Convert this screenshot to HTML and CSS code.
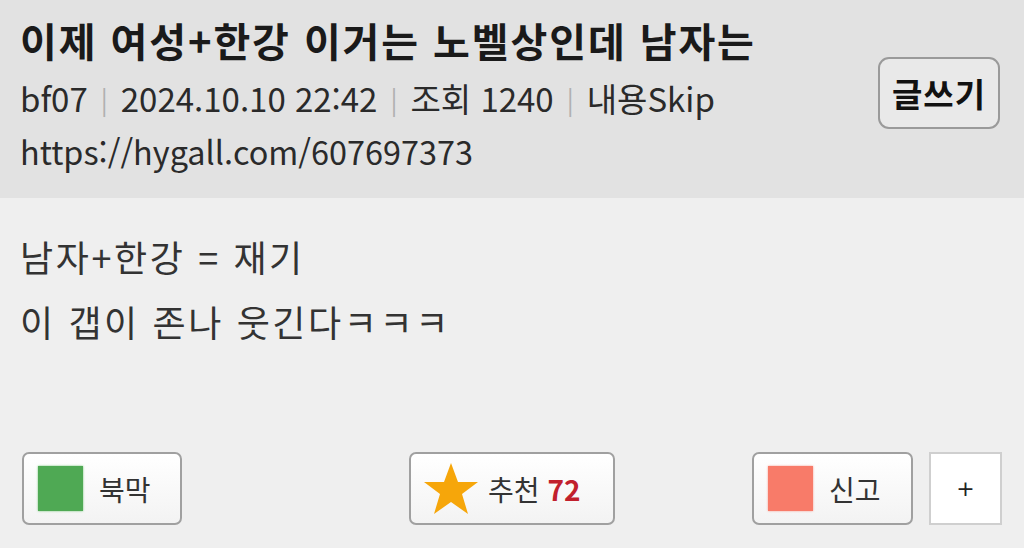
FILE: index.html
```html
<!DOCTYPE html>
<html lang="ko">
<head>
<meta charset="utf-8">
<link rel="stylesheet" href="styles.css">
</head>
<body>
<div class="page">
  <header class="head">
    <div class="head-text">
      <h1 class="title">이제 여성+한강 이거는 노벨상인데 남자는</h1>
      <div class="meta">bf07<span class="sep">|</span>2024.10.10 22:42<span class="sep">|</span>조회 1240<span class="sep">|</span>내용Skip</div>
      <div class="url">https://hygall.com/607697373</div>
    </div>
    <button class="write">글쓰기</button>
  </header>
  <main class="content">
    <p class="line">남자+한강 = 재기</p>
    <p class="line">이 갭이 존나 웃긴다ㅋㅋㅋ</p>
  </main>
  <footer class="actions">
    <div class="grp left">
      <button class="btn"><span class="sq green"></span><span class="lbl">북막</span></button>
    </div>
    <div class="grp mid">
      <button class="btn rec">
        <svg class="star" viewBox="0 0 56 54" width="56" height="54"><polygon points="28,1 35,20 55,20 39,32 45,52 28,40 11,52 17,32 1,20 21,20" fill="#f6a60a"/></svg>
        <span class="lbl">추천 <b class="cnt">72</b></span>
      </button>
    </div>
    <div class="grp right">
      <button class="btn"><span class="sq red"></span><span class="lbl">신고</span></button>
      <button class="plus">+</button>
    </div>
  </footer>
</div>
</body>
</html>
```
FILE: styles.css
```css
* { box-sizing: border-box; }
html, body { margin: 0; padding: 0; }
body {
  font-family: "Noto Sans CJK KR", "Noto Sans", sans-serif;
  background: #efefef;
  color: #222;
}
.page {
  width: 1024px;
  height: 548px;
  display: flex;
  flex-direction: column;
  overflow: hidden;
}
.head {
  height: 198px;
  background: #e2e2e2;
  padding: 14px 24px 0 20px;
  display: flex;
  justify-content: space-between;
  align-items: flex-start;
}
.title {
  margin: 0;
  font-size: 40px;
  line-height: 52px;
  font-weight: 700;
  color: #1a1a1a;
  letter-spacing: 1.9px;
  white-space: nowrap;
}
.meta, .url {
  font-size: 33px;
  line-height: 52px;
  color: #2a2a2a;
  white-space: nowrap;
}
.meta { margin-top: 6px; }
.url { margin-top: -2px; font-size: 32.4px; }
.sep {
  color: #b0b0b0;
  font-size: 26px;
  margin: 0 13px;
  position: relative;
  top: -2px;
}
.write {
  margin-top: 43px;
  width: 122px;
  height: 72px;
  border: 2px solid #9a9a9a;
  border-radius: 11px;
  background: #e9e9e9;
  font-family: inherit;
  font-size: 33px;
  letter-spacing: 1px;
  font-weight: 700;
  color: #111;
  padding: 0;
}
.content {
  flex: 1;
  padding: 26px 20px 0 20px;
}
.line {
  margin: 0;
  font-size: 36px;
  line-height: 65px;
  letter-spacing: 2.6px;
  color: #333;
}
.actions {
  display: grid;
  grid-template-columns: 1fr auto 1fr;
  padding: 0 22px 23px 22px;
  align-items: center;
}
.grp { display: flex; gap: 16px; }
.mid { justify-self: center; }
.right { justify-self: end; }
.btn {
  height: 73px;
  border: 2px solid #a0a0a0;
  border-radius: 7px;
  background: linear-gradient(#ffffff, #f3f3f3);
  display: flex;
  align-items: center;
  padding: 0 0 0 14px;
  font-family: inherit;
  width: 160px;
}
.rec { width: 206px; padding-left: 10px; }
.right .btn { width: 161px; }
.sq {
  width: 45px;
  height: 45px;
  display: block;
  flex: none;
}
.green { background: #4fa954; box-shadow: 0 0 2px #74c878; }
.red { background: #f87b69; box-shadow: 0 0 2px #f9a092; }
.lbl {
  font-size: 28px;
  color: #333;
  margin-left: 16px;
}
.star { flex: none; margin-left: 2px; }
.rec .lbl { margin-left: 9px; }
.cnt { color: #c1202d; font-weight: 700; }
.plus {
  width: 73px;
  height: 73px;
  border: 2px solid #cfcfcf;
  border-radius: 0;
  background: #fff;
  font-family: "DejaVu Sans", sans-serif;
  font-size: 22px;
  color: #222;
  padding: 0;
}
```
